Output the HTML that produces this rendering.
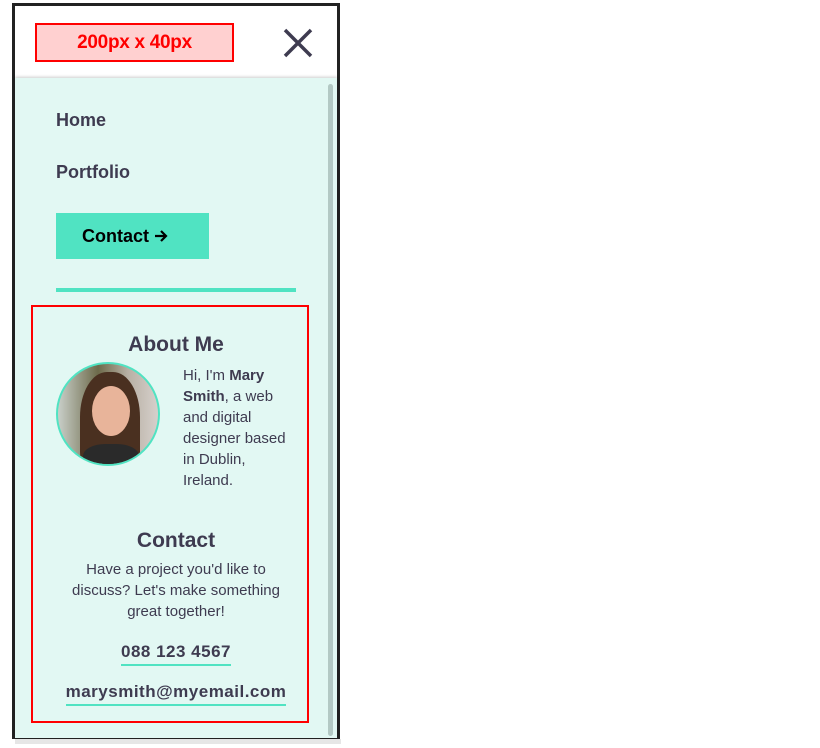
<!DOCTYPE html>
<html><head><meta charset="utf-8"><style>
*{margin:0;padding:0;box-sizing:border-box}
body{width:820px;height:748px;background:#fff;font-family:"Liberation Sans",sans-serif;position:relative;overflow:hidden;color:#3e3b50}
.frame{position:absolute;left:12px;top:3px;width:328px;height:736px;border:3px solid #222;background:#fff}
.shadow{position:absolute;left:15px;top:739px;width:326px;height:5px;background:#e6e6e6}
.logo{position:absolute;left:20px;top:17px;width:199px;height:39px;border:2px solid #f00;background:#ffd0d0;color:#f00;font-weight:bold;font-size:19px;text-align:center;line-height:35px;letter-spacing:-0.3px}
.x{position:absolute;left:268px;top:22px}
.panel{position:absolute;left:0;top:72px;width:322px;height:660px;background:#e2f8f3;box-shadow:0 -1px 3px rgba(0,0,0,.2)}
.sb{position:absolute;left:313px;top:6px;width:5px;height:652px;background:#b3c9c4;border-radius:3px}
.nav{position:absolute;left:41px;font-size:18px;font-weight:bold}
.btn{position:absolute;left:41px;top:135px;width:153px;height:46px;background:#50e3c2;color:#000;font-size:18px;font-weight:bold;line-height:46px;padding-left:26px}
.line{position:absolute;left:41px;top:210px;width:240px;height:4px;background:#50e3c2}
.box{position:absolute;left:16px;top:227px;width:278px;height:418px;border:2px solid #f00}
h2{position:absolute;left:6px;width:100%;text-align:center;font-size:21px;font-weight:bold}
.photo{position:absolute;left:23px;top:55px;width:104px;height:104px;border-radius:50%;border:2px solid #50e3c2;overflow:hidden;background:linear-gradient(90deg,#c9cfc9 0,#6d6a4a 40%,#b8b0a4 70%,#d6d0cc 100%)}
.about{position:absolute;left:150px;top:58px;font-size:15px;line-height:21px;width:112px}
.ct{position:absolute;left:6px;width:100%;text-align:center;font-size:15px;line-height:21px}
.lnk{display:inline-block;font-weight:bold;font-size:17px;letter-spacing:0.5px;border-bottom:2px solid #50e3c2;padding-bottom:2px}
</style></head><body>
<div class="shadow"></div>
<div class="frame">
<div class="logo">200px x 40px</div>
<svg class="x" width="30" height="30" viewBox="0 0 30 30"><path d="M2 2L28 28M28 2L2 28" stroke="#3e3b50" stroke-width="3.5"/></svg>
<div class="panel">
<div class="sb"></div>
<div class="nav" style="top:32px">Home</div>
<div class="nav" style="top:84px">Portfolio</div>
<div class="btn">Contact <svg width="14" height="14" viewBox="0 0 14 14" style="vertical-align:-1px"><path d="M1 7H12M7 2L12 7L7 12" stroke="#000" stroke-width="2.2" fill="none"/></svg></div>
<div class="line"></div>
<div class="box">
<h2 style="top:26px">About Me</h2>
<div class="photo">
<div style="position:absolute;left:22px;top:8px;width:60px;height:100px;border-radius:45% 45% 20% 20%;background:#4a3020"></div>
<div style="position:absolute;left:34px;top:22px;width:38px;height:50px;border-radius:50%;background:#e8b49a"></div>
<div style="position:absolute;left:25px;top:80px;width:56px;height:30px;background:#2a2a2a;border-radius:40% 40% 0 0"></div>
</div>
<div class="about">Hi, I'm <b>Mary Smith</b>, a web and digital designer based in Dublin, Ireland.</div>
<h2 style="top:222px">Contact</h2>
<div class="ct" style="top:252px">Have a project you'd like to<br>discuss? Let's make something<br>great together!</div>
<div class="ct" style="top:334px"><span class="lnk">088 123 4567</span></div>
<div class="ct" style="top:374px"><span class="lnk">marysmith@myemail.com</span></div>
</div>
</div>
</div>
</body></html>
